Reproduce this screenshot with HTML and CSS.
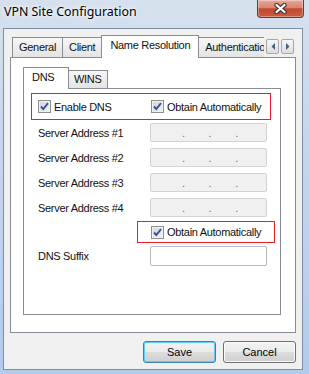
FILE: index.html
```html
<!DOCTYPE html>
<html lang="en">
<head>
    <meta charset="UTF-8">
    <title>VPN Site Configuration</title>
    <link rel="stylesheet" href="styles.css">
</head>
<body>
    <div class="window">
        <div class="titlebar">
            <span class="title">VPN Site Configuration</span>
            <div class="close">
                <svg width="15" height="11" viewBox="0 0 15 11">
                    <path d="M3.5 2 L11.5 9 M11.5 2 L3.5 9" stroke="#3b3b3b" stroke-width="4.4" stroke-linecap="round"/>
                    <path d="M3.5 2 L11.5 9 M11.5 2 L3.5 9" stroke="#ffffff" stroke-width="2.2" stroke-linecap="round"/>
                </svg>
            </div>
        </div>
        <div class="client">
            <div class="tabstrip">
                <div class="tab-list">
                    <div class="tab">General</div>
                    <div class="tab">Client</div>
                    <div class="tab active">Name Resolution</div>
                    <div class="tab">Authentication</div>
                </div>
                <div class="tab-scroll">
                    <span class="scroll-btn">
                        <svg width="4" height="7" viewBox="0 0 4 7"><path d="M4 0 L0.5 3.5 L4 7 Z" fill="#4a5d86"/></svg>
                    </span>
                    <span class="scroll-btn">
                        <svg width="4" height="7" viewBox="0 0 4 7"><path d="M0 0 L3.5 3.5 L0 7 Z" fill="#4a5d86"/></svg>
                    </span>
                </div>
            </div>
            <div class="page">
                <div class="tabstrip sub">
                    <div class="tab active">DNS</div>
                    <div class="tab">WINS</div>
                </div>
                <div class="subpage">
                    <div class="mark mark-top">
                        <label class="check">
                            <span class="box"><svg width="11" height="11" viewBox="0 0 11 11"><path d="M2 5.5 L4.3 8 L9 2.2" fill="none" stroke="#3a4f9c" stroke-width="1.9"/></svg></span>
                            Enable DNS
                        </label>
                        <label class="check">
                            <span class="box"><svg width="11" height="11" viewBox="0 0 11 11"><path d="M2 5.5 L4.3 8 L9 2.2" fill="none" stroke="#3a4f9c" stroke-width="1.9"/></svg></span>
                            Obtain Automatically
                        </label>
                    </div>
                    <div class="field">
                        <span class="label">Server Address #1</span>
                        <div class="ip"><span>.</span><span>.</span><span>.</span></div>
                    </div>
                    <div class="field">
                        <span class="label">Server Address #2</span>
                        <div class="ip"><span>.</span><span>.</span><span>.</span></div>
                    </div>
                    <div class="field">
                        <span class="label">Server Address #3</span>
                        <div class="ip"><span>.</span><span>.</span><span>.</span></div>
                    </div>
                    <div class="field">
                        <span class="label">Server Address #4</span>
                        <div class="ip"><span>.</span><span>.</span><span>.</span></div>
                    </div>
                    <div class="mark mark-bottom">
                        <label class="check">
                            <span class="box"><svg width="11" height="11" viewBox="0 0 11 11"><path d="M2 5.5 L4.3 8 L9 2.2" fill="none" stroke="#3a4f9c" stroke-width="1.9"/></svg></span>
                            Obtain Automatically
                        </label>
                    </div>
                    <div class="field suffix">
                        <span class="label">DNS Suffix</span>
                        <div class="textbox"></div>
                    </div>
                </div>
            </div>
            <div class="actions">
                <button class="btn default">Save</button>
                <button class="btn">Cancel</button>
            </div>
        </div>
    </div>
</body>
</html>
```

FILE: styles.css
```css
body{
    margin: 0;
    font-family: "Liberation Sans", Arial, sans-serif;
    font-size: 11px;
    letter-spacing: -0.3px;
    color: #111;
}
.window{
    width: 309px;
    height: 374px;
    display: flex;
    flex-direction: column;
    background: linear-gradient(#d6e1ee, #c4d6ec 40%, #b3cbea);
}
.titlebar{
    height: 28px;
    display: flex;
    justify-content: space-between;
    align-items: flex-start;
    padding: 0 5px 0 4px;
}
.title{
    font-family: "Noto Sans", "Liberation Sans", sans-serif;
    font-size: 12.4px;
    letter-spacing: 0;
    line-height: 16px;
    padding-top: 4px;
    color: #000;
    text-shadow: 0 0 6px #fff, 0 0 3px #fff;
}
.close{
    width: 47px;
    height: 18px;
    box-sizing: border-box;
    border: 1px solid #6a3a36;
    border-top: none;
    border-radius: 0 0 4px 4px;
    background: linear-gradient(#e8a898, #d88470 45%, #c4472f 52%, #cc5b3f);
    box-shadow: inset 0 0 0 1px rgba(255,255,255,0.35);
    display: flex;
    align-items: center;
    justify-content: center;
}
.client{
    flex: 1;
    margin: 0 6px 4px 3px;
    border: 1px solid #7d8ea3;
    background: #f0f0f0;
    display: flex;
    flex-direction: column;
    padding: 6px;
}
.tabstrip{
    display: flex;
    align-items: flex-end;
    height: 23px;
    margin-bottom: -1px;
    padding: 0 2px;
    position: relative;
    z-index: 1;
}
.tab-list{
    flex: 1;
    display: flex;
    align-items: flex-end;
    overflow: hidden;
    height: 100%;
}
.tab{
    flex: none;
    box-sizing: border-box;
    height: 20px;
    margin: 0 -1px 1px 0;
    padding: 0 6px;
    border: 1px solid #898c95;
    border-bottom: none;
    line-height: 18px;
    white-space: nowrap;
    background: linear-gradient(#f6f6f6, #e4e4e4);
}
.tab.active{
    height: 23px;
    margin-bottom: 0;
    padding: 0 8px;
    background: #fff;
    position: relative;
}
.tab-scroll{
    display: flex;
    gap: 2px;
    margin: 0 0 4px 2px;
}
.scroll-btn{
    width: 13px;
    height: 15px;
    box-sizing: border-box;
    border: 1px solid #a7a7a7;
    border-radius: 2px;
    background: linear-gradient(#f6f6f6, #dedede);
    display: flex;
    align-items: center;
    justify-content: center;
}
.page{
    flex: 1;
    background: #fff;
    border: 1px solid #898c95;
    display: flex;
    flex-direction: column;
    padding: 9px 14px 17px 12px;
}
.tabstrip.sub{
    height: 22px;
    padding: 0;
}
.tabstrip.sub .tab{
    height: 18px;
    padding: 0 5px;
    line-height: 17px;
}
.tabstrip.sub .tab.active{
    height: 22px;
    min-width: 46px;
    padding: 0 8px;
    line-height: 18px;
}
.subpage{
    flex: 1;
    border: 1px solid #898c95;
}
.mark{
    box-sizing: border-box;
    border: 1px solid #ee1d23;
    display: flex;
    align-items: center;
}
.mark-top{
    width: 240px;
    height: 27px;
    margin: 4px 0 0 7px;
    padding-left: 6px;
}
.mark-top .check:first-child{
    width: 113px;
}
.mark-bottom{
    width: 138px;
    height: 22px;
    margin: 4px 0 0 113px;
    padding-left: 13px;
}
.check{
    display: flex;
    align-items: center;
    gap: 3px;
    white-space: nowrap;
}
.box{
    width: 13px;
    height: 13px;
    box-sizing: border-box;
    border: 1px solid #8e8f8f;
    background: linear-gradient(135deg, #cfd3da, #f4f4f4);
    box-shadow: inset 0 0 0 1px #eef0f3;
    display: flex;
    align-items: center;
    justify-content: center;
}
.field{
    display: flex;
    align-items: center;
    height: 19px;
    margin: 6px 0 0 14px;
}
.mark-top + .field{
    margin-top: 3px;
}
.label{
    width: 112px;
    flex: none;
}
.ip{
    width: 117px;
    height: 19px;
    box-sizing: border-box;
    border: 1px solid #d3d3d3;
    border-radius: 2px;
    background: #f0f0f0;
    display: flex;
    justify-content: space-between;
    align-items: flex-end;
    padding: 0 28px 1px 31px;
    color: #6d6d6d;
    line-height: 14px;
}
.field.suffix{
    height: 20px;
    margin-top: 3px;
}
.textbox{
    width: 117px;
    height: 20px;
    box-sizing: border-box;
    border: 1px solid #b7b9bd;
    border-radius: 2px;
    background: #fff;
}
.actions{
    display: flex;
    justify-content: flex-end;
    gap: 7px;
    margin-top: 8px;
}
.btn{
    width: 73px;
    height: 22px;
    padding: 0;
    border: 1px solid #707070;
    border-radius: 3px;
    background: linear-gradient(#f2f2f2, #ebebeb 50%, #dddddd 51%, #cfcfcf);
    box-shadow: inset 0 0 0 1px #fbfbfb;
    font-family: "Liberation Sans", Arial, sans-serif;
    font-size: 11px;
    letter-spacing: 0;
    color: #000;
}
.btn.default{
    border-color: #3c7fb1;
    box-shadow: inset 0 0 0 1px #5cd0fb;
}
```
